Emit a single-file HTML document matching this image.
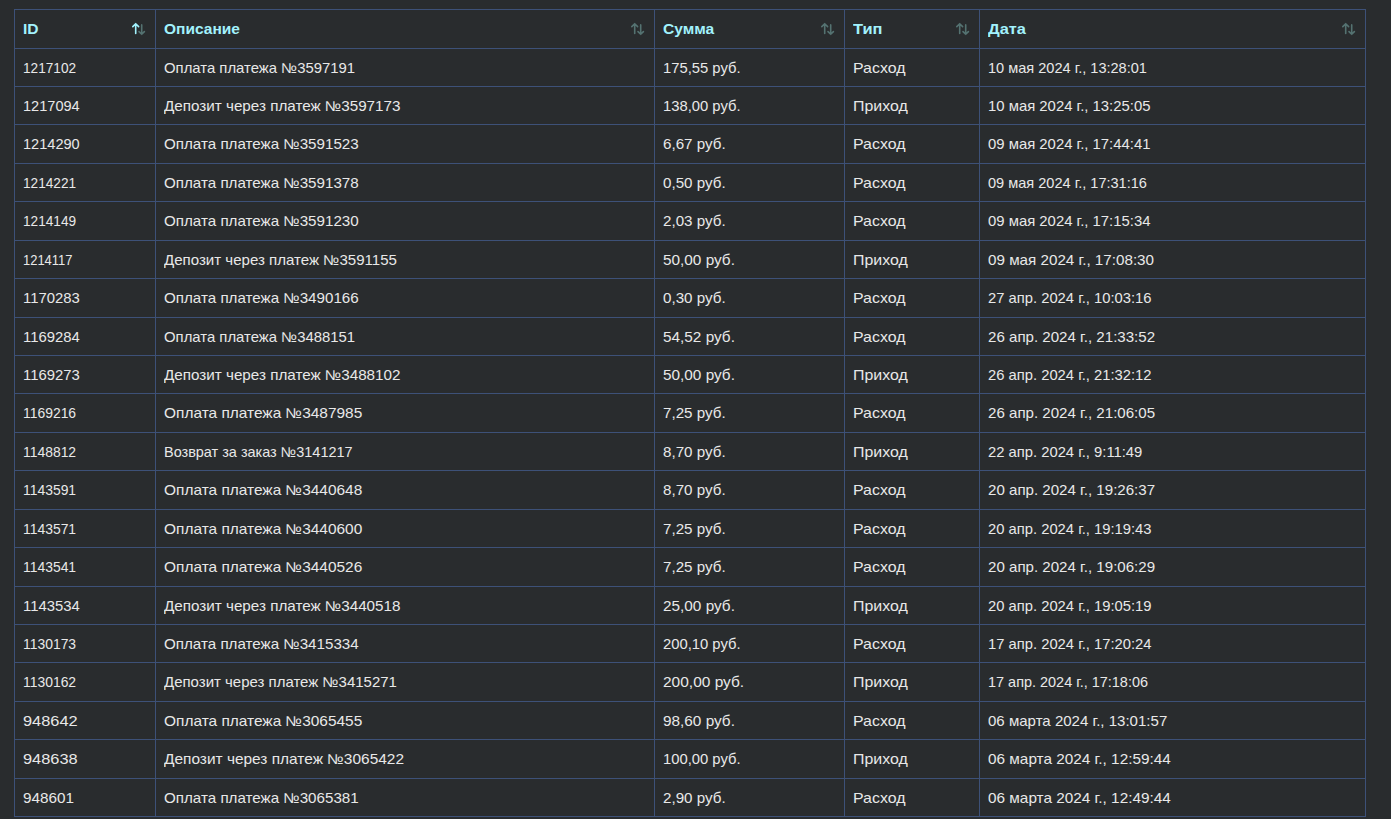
<!DOCTYPE html><html><head><meta charset="utf-8"><style>
html,body{margin:0;padding:0}
body{width:1391px;height:819px;overflow:hidden;background:#292c2e;position:relative;font-family:"Liberation Sans",sans-serif}
.h{position:absolute;height:1px;background:#3d5178;left:14px;width:1352px}
.v{position:absolute;width:1px;background:#3d5178;top:9px;height:808px}
.t,.th{position:absolute;white-space:nowrap;line-height:20px;transform-origin:0 0}
.t{font-size:14.3px;color:#e8e8e8}
.th{font-size:14px;font-weight:bold;color:#a2f2fd}
.s{position:absolute;width:16px;height:16px}

</style></head><body>
<div class="h" style="top:9px"></div>
<div class="h" style="top:48px"></div>
<div class="h" style="top:86px"></div>
<div class="h" style="top:124px"></div>
<div class="h" style="top:163px"></div>
<div class="h" style="top:201px"></div>
<div class="h" style="top:240px"></div>
<div class="h" style="top:278px"></div>
<div class="h" style="top:317px"></div>
<div class="h" style="top:355px"></div>
<div class="h" style="top:393px"></div>
<div class="h" style="top:432px"></div>
<div class="h" style="top:470px"></div>
<div class="h" style="top:509px"></div>
<div class="h" style="top:547px"></div>
<div class="h" style="top:586px"></div>
<div class="h" style="top:624px"></div>
<div class="h" style="top:662px"></div>
<div class="h" style="top:701px"></div>
<div class="h" style="top:739px"></div>
<div class="h" style="top:778px"></div>
<div class="h" style="top:816px"></div>
<div class="v" style="left:14px"></div>
<div class="v" style="left:155px"></div>
<div class="v" style="left:654px"></div>
<div class="v" style="left:844px"></div>
<div class="v" style="left:979px"></div>
<div class="v" style="left:1365px"></div>
<div class="th" style="left:23px;top:19px;transform:scaleX(1.1143)">ID</div>
<svg class="s" style="left:131px;top:21px" viewBox="0 0 16 16"><path d="M4.7 12.4V2.8M1.8 5.6L4.7 2.7L7.6 5.6" fill="none" stroke="#a2f2fd" stroke-width="1.6" stroke-linecap="round" stroke-linejoin="round"/><path d="M10.7 3.9V13.2M8.0 10.6L10.7 13.3L13.4 10.6" fill="none" stroke="#547271" stroke-width="1.6" stroke-linecap="round" stroke-linejoin="round"/></svg>
<div class="th" style="left:164px;top:19px;transform:scaleX(1.1073)">Описание</div>
<svg class="s" style="left:630px;top:21px" viewBox="0 0 16 16"><path d="M4.7 12.4V2.8M1.8 5.6L4.7 2.7L7.6 5.6" fill="none" stroke="#547271" stroke-width="1.6" stroke-linecap="round" stroke-linejoin="round"/><path d="M10.7 3.9V13.2M8.0 10.6L10.7 13.3L13.4 10.6" fill="none" stroke="#547271" stroke-width="1.6" stroke-linecap="round" stroke-linejoin="round"/></svg>
<div class="th" style="left:663px;top:19px;transform:scaleX(1.1145)">Сумма</div>
<svg class="s" style="left:820px;top:21px" viewBox="0 0 16 16"><path d="M4.7 12.4V2.8M1.8 5.6L4.7 2.7L7.6 5.6" fill="none" stroke="#547271" stroke-width="1.6" stroke-linecap="round" stroke-linejoin="round"/><path d="M10.7 3.9V13.2M8.0 10.6L10.7 13.3L13.4 10.6" fill="none" stroke="#547271" stroke-width="1.6" stroke-linecap="round" stroke-linejoin="round"/></svg>
<div class="th" style="left:853px;top:19px;transform:scaleX(1.1716)">Тип</div>
<svg class="s" style="left:955px;top:21px" viewBox="0 0 16 16"><path d="M4.7 12.4V2.8M1.8 5.6L4.7 2.7L7.6 5.6" fill="none" stroke="#547271" stroke-width="1.6" stroke-linecap="round" stroke-linejoin="round"/><path d="M10.7 3.9V13.2M8.0 10.6L10.7 13.3L13.4 10.6" fill="none" stroke="#547271" stroke-width="1.6" stroke-linecap="round" stroke-linejoin="round"/></svg>
<div class="th" style="left:988px;top:19px;transform:scaleX(1.1726)">Дата</div>
<svg class="s" style="left:1341px;top:21px" viewBox="0 0 16 16"><path d="M4.7 12.4V2.8M1.8 5.6L4.7 2.7L7.6 5.6" fill="none" stroke="#547271" stroke-width="1.6" stroke-linecap="round" stroke-linejoin="round"/><path d="M10.7 3.9V13.2M8.0 10.6L10.7 13.3L13.4 10.6" fill="none" stroke="#547271" stroke-width="1.6" stroke-linecap="round" stroke-linejoin="round"/></svg>
<div class="t" style="left:23px;top:58px;transform:scaleX(0.9534)">1217102</div>
<div class="t" style="left:164px;top:58px;transform:scaleX(1.0415)">Оплата платежа №3597191</div>
<div class="t" style="left:663px;top:58px;transform:scaleX(1.0350)">175,55 руб.</div>
<div class="t" style="left:853px;top:58px;transform:scaleX(1.1128)">Расход</div>
<div class="t" style="left:988px;top:58px;transform:scaleX(1.0175)">10 мая 2024 г., 13:28:01</div>
<div class="t" style="left:23px;top:96px;transform:scaleX(1.0184)">1217094</div>
<div class="t" style="left:164px;top:96px;transform:scaleX(1.0642)">Депозит через платеж №3597173</div>
<div class="t" style="left:663px;top:96px;transform:scaleX(1.0350)">138,00 руб.</div>
<div class="t" style="left:853px;top:96px;transform:scaleX(1.1135)">Приход</div>
<div class="t" style="left:988px;top:96px;transform:scaleX(1.0402)">10 мая 2024 г., 13:25:05</div>
<div class="t" style="left:23px;top:134px;transform:scaleX(1.0184)">1214290</div>
<div class="t" style="left:164px;top:134px;transform:scaleX(1.0609)">Оплата платежа №3591523</div>
<div class="t" style="left:663px;top:134px;transform:scaleX(1.0608)">6,67 руб.</div>
<div class="t" style="left:853px;top:134px;transform:scaleX(1.1128)">Расход</div>
<div class="t" style="left:988px;top:134px;transform:scaleX(1.0402)">09 мая 2024 г., 17:44:41</div>
<div class="t" style="left:23px;top:173px;transform:scaleX(0.9534)">1214221</div>
<div class="t" style="left:164px;top:173px;transform:scaleX(1.0609)">Оплата платежа №3591378</div>
<div class="t" style="left:663px;top:173px;transform:scaleX(1.0608)">0,50 руб.</div>
<div class="t" style="left:853px;top:173px;transform:scaleX(1.1128)">Расход</div>
<div class="t" style="left:988px;top:173px;transform:scaleX(1.0175)">09 мая 2024 г., 17:31:16</div>
<div class="t" style="left:23px;top:211px;transform:scaleX(0.9534)">1214149</div>
<div class="t" style="left:164px;top:211px;transform:scaleX(1.0609)">Оплата платежа №3591230</div>
<div class="t" style="left:663px;top:211px;transform:scaleX(1.0608)">2,03 руб.</div>
<div class="t" style="left:853px;top:211px;transform:scaleX(1.1128)">Расход</div>
<div class="t" style="left:988px;top:211px;transform:scaleX(1.0402)">09 мая 2024 г., 17:15:34</div>
<div class="t" style="left:23px;top:250px;transform:scaleX(0.9062)">1214117</div>
<div class="t" style="left:164px;top:250px;transform:scaleX(1.0533)">Депозит через платеж №3591155</div>
<div class="t" style="left:663px;top:250px;transform:scaleX(1.0732)">50,00 руб.</div>
<div class="t" style="left:853px;top:250px;transform:scaleX(1.1135)">Приход</div>
<div class="t" style="left:988px;top:250px;transform:scaleX(1.0630)">09 мая 2024 г., 17:08:30</div>
<div class="t" style="left:23px;top:288px;transform:scaleX(1.0387)">1170283</div>
<div class="t" style="left:164px;top:288px;transform:scaleX(1.0609)">Оплата платежа №3490166</div>
<div class="t" style="left:663px;top:288px;transform:scaleX(1.0608)">0,30 руб.</div>
<div class="t" style="left:853px;top:288px;transform:scaleX(1.1128)">Расход</div>
<div class="t" style="left:988px;top:288px;transform:scaleX(1.0332)">27 апр. 2024 г., 10:03:16</div>
<div class="t" style="left:23px;top:327px;transform:scaleX(1.0387)">1169284</div>
<div class="t" style="left:164px;top:327px;transform:scaleX(1.0415)">Оплата платежа №3488151</div>
<div class="t" style="left:663px;top:327px;transform:scaleX(1.0732)">54,52 руб.</div>
<div class="t" style="left:853px;top:327px;transform:scaleX(1.1128)">Расход</div>
<div class="t" style="left:988px;top:327px;transform:scaleX(1.0557)">26 апр. 2024 г., 21:33:52</div>
<div class="t" style="left:23px;top:365px;transform:scaleX(1.0387)">1169273</div>
<div class="t" style="left:164px;top:365px;transform:scaleX(1.0642)">Депозит через платеж №3488102</div>
<div class="t" style="left:663px;top:365px;transform:scaleX(1.0732)">50,00 руб.</div>
<div class="t" style="left:853px;top:365px;transform:scaleX(1.1135)">Приход</div>
<div class="t" style="left:988px;top:365px;transform:scaleX(1.0332)">26 апр. 2024 г., 21:32:12</div>
<div class="t" style="left:23px;top:403px;transform:scaleX(0.9725)">1169216</div>
<div class="t" style="left:164px;top:403px;transform:scaleX(1.0802)">Оплата платежа №3487985</div>
<div class="t" style="left:663px;top:403px;transform:scaleX(1.0608)">7,25 руб.</div>
<div class="t" style="left:853px;top:403px;transform:scaleX(1.1128)">Расход</div>
<div class="t" style="left:988px;top:403px;transform:scaleX(1.0557)">26 апр. 2024 г., 21:06:05</div>
<div class="t" style="left:23px;top:442px;transform:scaleX(0.9725)">1148812</div>
<div class="t" style="left:164px;top:442px;transform:scaleX(1.0113)">Возврат за заказ №3141217</div>
<div class="t" style="left:663px;top:442px;transform:scaleX(1.0608)">8,70 руб.</div>
<div class="t" style="left:853px;top:442px;transform:scaleX(1.1135)">Приход</div>
<div class="t" style="left:988px;top:442px;transform:scaleX(1.0337)">22 апр. 2024 г., 9:11:49</div>
<div class="t" style="left:23px;top:480px;transform:scaleX(0.9725)">1143591</div>
<div class="t" style="left:164px;top:480px;transform:scaleX(1.0802)">Оплата платежа №3440648</div>
<div class="t" style="left:663px;top:480px;transform:scaleX(1.0608)">8,70 руб.</div>
<div class="t" style="left:853px;top:480px;transform:scaleX(1.1128)">Расход</div>
<div class="t" style="left:988px;top:480px;transform:scaleX(1.0557)">20 апр. 2024 г., 19:26:37</div>
<div class="t" style="left:23px;top:519px;transform:scaleX(0.9725)">1143571</div>
<div class="t" style="left:164px;top:519px;transform:scaleX(1.0802)">Оплата платежа №3440600</div>
<div class="t" style="left:663px;top:519px;transform:scaleX(1.0608)">7,25 руб.</div>
<div class="t" style="left:853px;top:519px;transform:scaleX(1.1128)">Расход</div>
<div class="t" style="left:988px;top:519px;transform:scaleX(1.0332)">20 апр. 2024 г., 19:19:43</div>
<div class="t" style="left:23px;top:557px;transform:scaleX(0.9725)">1143541</div>
<div class="t" style="left:164px;top:557px;transform:scaleX(1.0802)">Оплата платежа №3440526</div>
<div class="t" style="left:663px;top:557px;transform:scaleX(1.0608)">7,25 руб.</div>
<div class="t" style="left:853px;top:557px;transform:scaleX(1.1128)">Расход</div>
<div class="t" style="left:988px;top:557px;transform:scaleX(1.0557)">20 апр. 2024 г., 19:06:29</div>
<div class="t" style="left:23px;top:596px;transform:scaleX(1.0387)">1143534</div>
<div class="t" style="left:164px;top:596px;transform:scaleX(1.0642)">Депозит через платеж №3440518</div>
<div class="t" style="left:663px;top:596px;transform:scaleX(1.0732)">25,00 руб.</div>
<div class="t" style="left:853px;top:596px;transform:scaleX(1.1135)">Приход</div>
<div class="t" style="left:988px;top:596px;transform:scaleX(1.0332)">20 апр. 2024 г., 19:05:19</div>
<div class="t" style="left:23px;top:634px;transform:scaleX(0.9725)">1130173</div>
<div class="t" style="left:164px;top:634px;transform:scaleX(1.0609)">Оплата платежа №3415334</div>
<div class="t" style="left:663px;top:634px;transform:scaleX(1.0350)">200,10 руб.</div>
<div class="t" style="left:853px;top:634px;transform:scaleX(1.1128)">Расход</div>
<div class="t" style="left:988px;top:634px;transform:scaleX(1.0332)">17 апр. 2024 г., 17:20:24</div>
<div class="t" style="left:23px;top:672px;transform:scaleX(0.9725)">1130162</div>
<div class="t" style="left:164px;top:672px;transform:scaleX(1.0483)">Депозит через платеж №3415271</div>
<div class="t" style="left:663px;top:672px;transform:scaleX(1.0829)">200,00 руб.</div>
<div class="t" style="left:853px;top:672px;transform:scaleX(1.1135)">Приход</div>
<div class="t" style="left:988px;top:672px;transform:scaleX(1.0108)">17 апр. 2024 г., 17:18:06</div>
<div class="t" style="left:23px;top:711px;transform:scaleX(1.1458)">948642</div>
<div class="t" style="left:164px;top:711px;transform:scaleX(1.0802)">Оплата платежа №3065455</div>
<div class="t" style="left:663px;top:711px;transform:scaleX(1.0732)">98,60 руб.</div>
<div class="t" style="left:853px;top:711px;transform:scaleX(1.1128)">Расход</div>
<div class="t" style="left:988px;top:711px;transform:scaleX(1.0518)">06 марта 2024 г., 13:01:57</div>
<div class="t" style="left:23px;top:749px;transform:scaleX(1.1458)">948638</div>
<div class="t" style="left:164px;top:749px;transform:scaleX(1.0802)">Депозит через платеж №3065422</div>
<div class="t" style="left:663px;top:749px;transform:scaleX(1.0350)">100,00 руб.</div>
<div class="t" style="left:853px;top:749px;transform:scaleX(1.1135)">Приход</div>
<div class="t" style="left:988px;top:749px;transform:scaleX(1.0726)">06 марта 2024 г., 12:59:44</div>
<div class="t" style="left:23px;top:788px;transform:scaleX(1.0697)">948601</div>
<div class="t" style="left:164px;top:788px;transform:scaleX(1.0609)">Оплата платежа №3065381</div>
<div class="t" style="left:663px;top:788px;transform:scaleX(1.0608)">2,90 руб.</div>
<div class="t" style="left:853px;top:788px;transform:scaleX(1.1128)">Расход</div>
<div class="t" style="left:988px;top:788px;transform:scaleX(1.0726)">06 марта 2024 г., 12:49:44</div>
</body></html>
